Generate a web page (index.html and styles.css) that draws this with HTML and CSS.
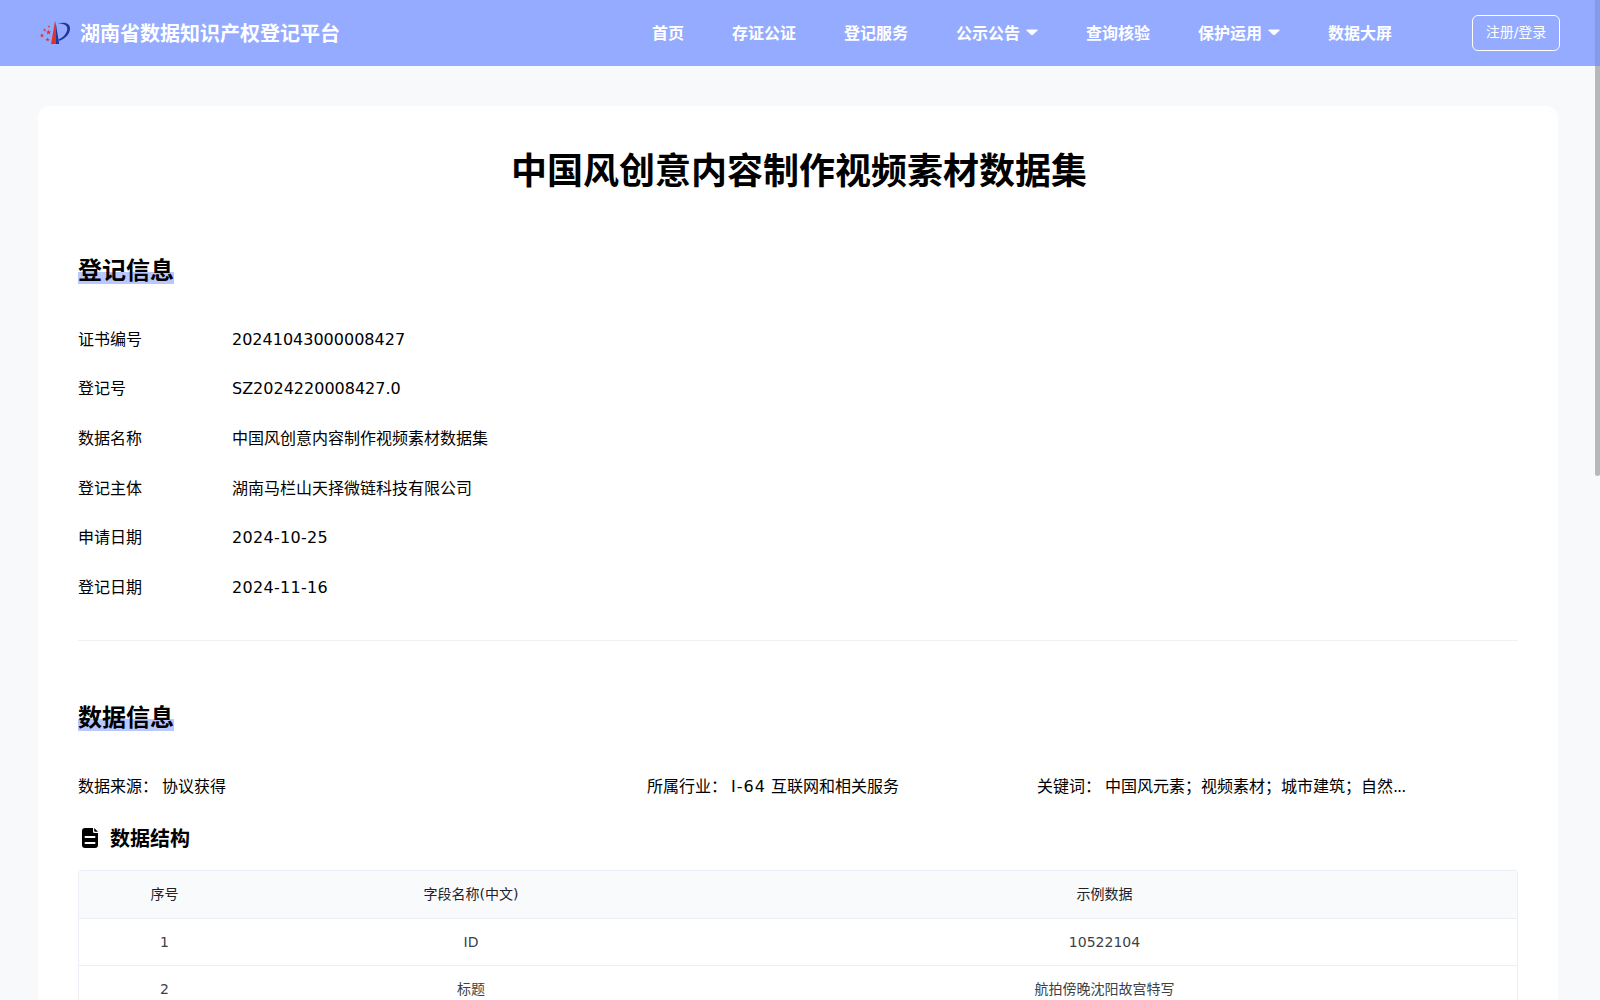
FILE: index.html
```html
<!DOCTYPE html>
<html lang="zh-CN">
<head>
<meta charset="utf-8">
<title>湖南省数据知识产权登记平台</title>
<link rel="stylesheet" href="styles.css">
</head>
<body>
<header class="header">
  <a class="brand">
    <svg class="logo" viewBox="0 0 32 26" width="32" height="26">
      <defs>
        <path id="star" d="M0-2.200 .6-.7 2.200-.7 .9.3 1.400 1.900 0 .9-1.400 1.900-.9.3-2.200-.7-.6-.7z"/>
      </defs>
      <path fill="#df3528" d="M15 1 11 24h4z"/>
      <path fill="#20399a" d="M15.400 1v23h3.800z"/>
      <path fill="#20399a" d="M18 3.800C25 1.200 30.600 3.600 30 9.200 29.400 14.600 24.500 19.300 18.600 21L18.300 19.500C22.800 17.700 26.800 13.700 27.200 9.200 27.600 4.700 23.400 3.500 18 3.800z"/>
      <g fill="#df3528">
        <use href="#star" transform="translate(9 6.500) scale(.6)"/>
        <use href="#star" transform="translate(4.600 10) scale(.75)"/>
        <use href="#star" transform="translate(8.600 12.300) scale(1.200)"/>
        <use href="#star" transform="translate(2 15.500)"/>
        <use href="#star" transform="translate(7.500 19.700)"/>
      </g>
    </svg>
    <span class="brand-name">湖南省数据知识产权登记平台</span>
  </a>
  <nav class="nav">
    <a>首页</a>
    <a>存证公证</a>
    <a>登记服务</a>
    <a>公示公告<svg class="caret" viewBox="0 0 12 7" width="12" height="7"><path d="M1 .5h10q1 .2.500 1L7 5.800q-1 .8-2 0L.5 1.500Q0 .7 1 .5z"/></svg></a>
    <a>查询核验</a>
    <a>保护运用<svg class="caret" viewBox="0 0 12 7" width="12" height="7"><path d="M1 .5h10q1 .2.500 1L7 5.800q-1 .8-2 0L.5 1.500Q0 .7 1 .5z"/></svg></a>
    <a>数据大屏</a>
  </nav>
  <a class="login">注册/登录</a>
</header>
<div class="scroll-thumb"></div>
<main class="card">
  <h1 class="title">中国风创意内容制作视频素材数据集</h1>
  <section class="register">
    <h2 class="heading">登记信息</h2>
    <dl class="fields">
      <dt>证书编号</dt><dd>20241043000008427</dd>
      <dt>登记号</dt><dd>SZ2024220008427.0</dd>
      <dt>数据名称</dt><dd>中国风创意内容制作视频素材数据集</dd>
      <dt>登记主体</dt><dd>湖南马栏山天择微链科技有限公司</dd>
      <dt>申请日期</dt><dd class="date">2024-10-25</dd>
      <dt>登记日期</dt><dd class="date">2024-11-16</dd>
    </dl>
  </section>
  <section class="data">
    <h2 class="heading">数据信息</h2>
    <div class="summary">
      <div><span>数据来源：</span><span>协议获得</span></div>
      <div><span>所属行业：</span><span><span class="code">I-64</span> 互联网和相关服务</span></div>
      <div><span>关键词：</span><span>中国风元素；视频素材；城市建筑；自然<span class="dots">...</span></span></div>
    </div>
    <h3 class="subheading">
      <svg viewBox="0 0 16 20" width="16" height="20"><path d="M3 0h8v3.500q0 1.500 1.500 1.500H16v12q0 3-3 3H3q-3 0-3-3V3Q0 0 3 0z"/><path d="M12.200 0 16 3.800h-2.800q-1 0-1-1z"/><path d="M3.500 9h9M3.500 15h9" stroke="#fff" stroke-width="2" stroke-linecap="round"/></svg>
      数据结构
    </h3>
    <table class="table">
      <colgroup><col class="col-index"><col class="col-name"><col></colgroup>
      <thead><tr><th>序号</th><th>字段名称(中文)</th><th>示例数据</th></tr></thead>
      <tbody>
        <tr><td>1</td><td>ID</td><td>10522104</td></tr>
        <tr><td>2</td><td>标题</td><td>航拍傍晚沈阳故宫特写</td></tr>
      </tbody>
    </table>
  </section>
</main>
</body>
</html>
```
FILE: styles.css
```css
* { box-sizing: border-box; }
body {
  margin: 0;
  height: 1000px;
  overflow: hidden;
  background: #f8f9fb;
  color: #000;
  font: 16px/24px "DejaVu Sans", "Noto Sans CJK SC", sans-serif;
}
h1, h2, h3, dl, dd { margin: 0; }
.header {
  display: flex;
  align-items: center;
  height: 66px;
  padding: 0 40px;
  background: #94abff;
  color: #fff;
}
.brand { display: flex; align-items: center; width: 612px; }
.logo { margin-right: 8px; margin-top: -1px; }
.brand-name { margin-top: -1px; font: 700 20px/30px "Noto Sans CJK SC", sans-serif; }
.nav {
  display: flex;
  gap: 48px;
  padding-bottom: 2px;
  white-space: nowrap;
  font: 700 16px/24px "Noto Sans CJK SC", sans-serif;
}
.nav a { display: flex; align-items: center; }
.caret { margin: 1px 0 0 6px; fill: #fff; }
.login {
  width: 88px;
  height: 36px;
  margin-left: auto;
  border: 1px solid #fff;
  border-radius: 6px;
  text-align: center;
  font-size: 14px;
  line-height: 32px;
}
.scroll-thumb {
  position: absolute;
  top: 0;
  right: 0;
  width: 5px;
  height: 476px;
  border-radius: 3px;
  background: #b7b8ba;
}
.scroll-thumb::before {
  content: "";
  display: block;
  height: 66px;
  background: #839bea;
}
.card {
  width: 1520px;
  height: 894px;
  overflow: hidden;
  margin: 40px 0 0 38px;
  padding: 35px 40px 0;
  border-radius: 12px 12px 0 0;
  background: #fff;
}
.title {
  padding-left: 2px;
  text-align: center;
  font: 700 36px/54px "Noto Sans CJK SC", sans-serif;
}
.register {
  height: 446px;
  padding-top: 57px;
  border-bottom: 1px solid #f0f0f2;
}
.heading {
  width: max-content;
  height: 36px;
  font: 700 24px/34px "Noto Sans CJK SC", sans-serif;
  background: linear-gradient(#b9c7ff, #b9c7ff) 0 20px / 100% 12px no-repeat;
}
.fields {
  display: grid;
  grid-template-columns: 154px 1fr;
  grid-auto-rows: 49.600px;
  align-items: center;
  margin-top: 27px;
}
.date { letter-spacing: .3px; }
.data { padding-top: 58px; }
.summary {
  display: grid;
  grid-template-columns: 569px 390px 1fr;
  margin-top: 40px;
  white-space: nowrap;
}
.summary div { display: flex; gap: 4px; }
.code { letter-spacing: 1px; }
.dots { letter-spacing: -1px; }
.subheading {
  display: flex;
  align-items: center;
  gap: 12px;
  margin: 24px 0 17px;
  padding-left: 4px;
  font: 700 20px/30px "Noto Sans CJK SC", sans-serif;
}
.table {
  width: 100%;
  table-layout: fixed;
  border: 1px solid #ebeef5;
  border-radius: 3px;
  border-spacing: 0;
  font-size: 14px;
  line-height: 22px;
  text-align: center;
}
.col-index { width: 171px; }
.col-name { width: 442px; }
th, td { padding: 0; border-bottom: 1px solid #ebeef5; }
th { height: 48px; padding-bottom: 2px; background: #f9fafc; color: #1d2129; font-weight: 400; }
td { height: 47px; color: #3d3f45; }
```
